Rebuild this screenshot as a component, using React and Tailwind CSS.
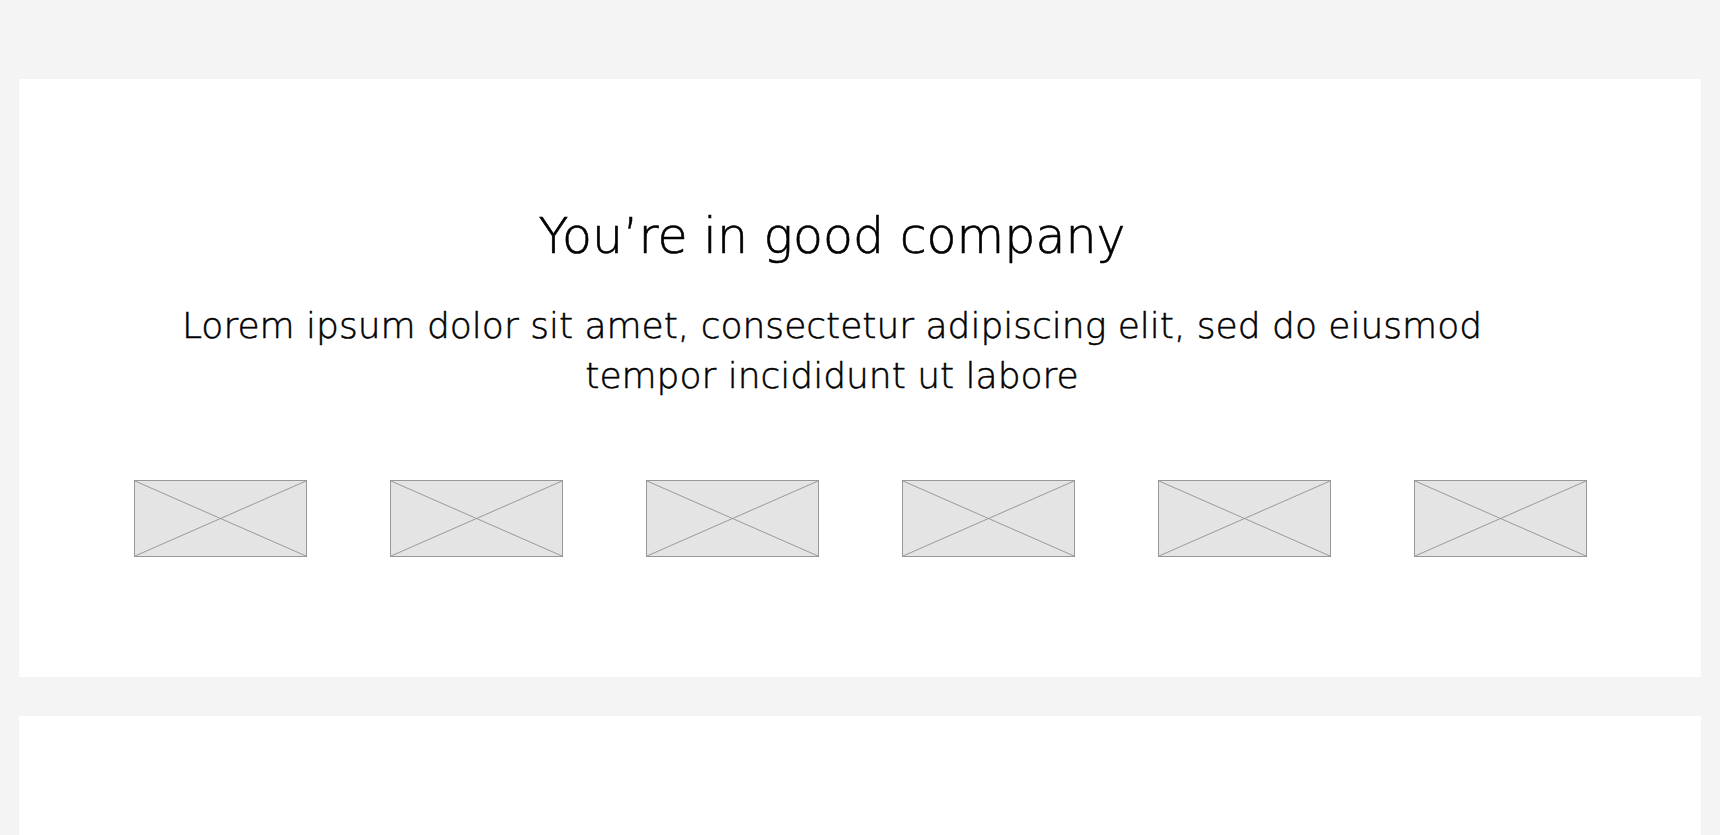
import React from 'react';

const logos = [1, 2, 3, 4, 5, 6];

const LogoPlaceholder = () => (
  <div className="w-[173px] h-[77px] bg-[#e4e4e4] border border-[#999999]">
    <svg className="w-full h-full block" viewBox="0 0 100 100" preserveAspectRatio="none">
      <line x1="0" y1="0" x2="100" y2="100" stroke="#999999" strokeWidth="1" vectorEffect="non-scaling-stroke" />
      <line x1="100" y1="0" x2="0" y2="100" stroke="#999999" strokeWidth="1" vectorEffect="non-scaling-stroke" />
    </svg>
  </div>
);

const App = () => {
  return (
    <div className="min-h-screen bg-[#f4f4f4] pt-[79px] px-[19px] font-['DejaVu_Sans',sans-serif] text-black">
      {/* Logos section */}
      <section className="bg-white h-[598px] flex flex-col items-center pt-[129px]">
        {/* Copy block sits a little left of the card centre */}
        <div className="flex flex-col items-center pr-[56px]">
          <h2 className="text-[49px] leading-[58px] font-light [-webkit-text-stroke:0.6px_black]">You’re in good company</h2>
          <p className="mt-[35px] max-w-[1360px] text-center text-[36px] leading-[50px] font-light [-webkit-text-stroke:0.5px_black]">
            Lorem ipsum dolor sit amet, consectetur adipiscing elit, sed do eiusmod tempor incididunt ut labore
          </p>
        </div>
        <div className="mt-[79px] flex gap-[83px]">
          {logos.map((n) => (
            <LogoPlaceholder key={n} />
          ))}
        </div>
      </section>

      {/* Next section */}
      <section className="bg-white mt-[39px] h-[400px]" />
    </div>
  );
};

export default App;
